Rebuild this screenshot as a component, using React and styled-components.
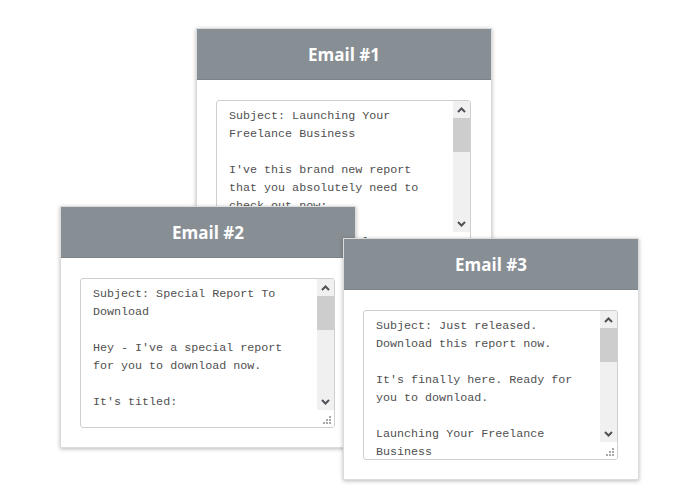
import styled, { createGlobalStyle } from 'styled-components';

const GlobalStyle = createGlobalStyle`
  html, body {
    margin: 0;
    padding: 0;
    background: #ffffff;
  }
`;

//Canvas the cards sit on
const Canvas = styled.div`
  position: relative;
  width: 700px;
  height: 500px;
  overflow: hidden;
  background: #ffffff;
`;

//Email card
const Card = styled.div`
  position: absolute;
  left: ${props => props.x}px;
  top: ${props => props.y}px;
  z-index: ${props => props.z};
  width: 296px;
  display: flex;
  flex-direction: column;
  background: #ffffff;
  border: 1px solid #dcdcdc;
  box-sizing: border-box;
  box-shadow: 0 1px 4px rgba(0, 0, 0, 0.28);
`;

const Header = styled.div`
  height: 51px;
  display: flex;
  align-items: center;
  justify-content: center;
  background: #878e94;
  border-bottom: 1px solid #7b8288;
  box-sizing: border-box;
`;

const Title = styled.h3`
  margin: 0;
  font-family: 'Open Sans', 'Liberation Sans', sans-serif;
  font-weight: 700;
  font-size: 17px;
  color: #ffffff;
`;

const Body = styled.div`
  padding: 20px 19px 19px 19px;
  display: flex;
`;

//Message box: text + scrollbar + resize grip
const MessageBox = styled.div`
  width: 255px;
  height: 150px;
  box-sizing: border-box;
  border: 1px solid #cfcfcf;
  border-radius: 3px;
  overflow: hidden;
  display: grid;
  grid-template-columns: 1fr 17px;
  grid-template-rows: 1fr 17px;
  background: #ffffff;
`;

const MessageText = styled.div`
  grid-column: 1;
  grid-row: 1 / span 2;
  padding: 6px 12px;
  overflow: hidden;
  white-space: pre-wrap;
  overflow-wrap: break-word;
  font-family: 'Liberation Mono', 'Courier New', monospace;
  font-size: 11.7px;
  line-height: 18px;
  color: #505050;
`;

const ScrollBar = styled.div`
  grid-column: 2;
  grid-row: 1;
  display: flex;
  flex-direction: column;
  background: #f0f0f0;
`;

const ScrollButton = styled.div`
  height: 17px;
  flex: none;
  display: flex;
  align-items: center;
  justify-content: center;
`;

const Track = styled.div`
  flex: 1;
  display: flex;
  flex-direction: column;
`;

const Thumb = styled.div`
  height: 34px;
  background: #cdcdcd;
`;

const Grip = styled.div`
  grid-column: 2;
  grid-row: 2;
  display: flex;
  align-items: flex-end;
  justify-content: flex-end;
  background: #ffffff;
`;

const Chevron = ({ up }) => (
  <svg width="9" height="6" viewBox="0 0 9 6">
    <path
      d={up ? 'M1 5 L4.5 1.5 L8 5' : 'M1 1 L4.5 4.5 L8 1'}
      fill="none"
      stroke="#505057"
      strokeWidth="2"
    />
  </svg>
);

const GripDots = () => (
  <svg width="17" height="17" viewBox="0 0 17 17">
    <g fill="#a8a8a8">
      <rect x="12" y="6" width="2" height="2" />
      <rect x="9" y="9" width="2" height="2" />
      <rect x="12" y="9" width="2" height="2" />
      <rect x="6" y="12" width="2" height="2" />
      <rect x="9" y="12" width="2" height="2" />
      <rect x="12" y="12" width="2" height="2" />
    </g>
  </svg>
);

const emails = [
  {
    id: 1,
    x: 196,
    y: 28,
    text:
      "Subject: Launching Your Freelance Business\n\n" +
      "I've this brand new report that you absolutely need to check out now:\n\n" +
      "Launching Your Freelance Business\n\n" +
      "It shows you step by step how to set up, find your first clients and grow a business you love.",
  },
  {
    id: 2,
    x: 60,
    y: 206,
    text:
      "Subject: Special Report To Download\n\n" +
      "Hey - I've a special report for you to download now.\n\n" +
      "It's titled:\n\n" +
      "Launching Your Freelance Business",
  },
  {
    id: 3,
    x: 343,
    y: 238,
    text:
      "Subject: Just released. Download this report now.\n\n" +
      "It's finally here. Ready for you to download.\n\n" +
      "Launching Your Freelance Business\n\n" +
      "Learn how to turn your skills into a freelance business.",
  },
];

function App() {
  return (
    <Canvas>
      <GlobalStyle />
      {emails.map(email => (
        <Card key={email.id} x={email.x} y={email.y} z={email.id}>
          <Header>
            <Title>Email #{email.id}</Title>
          </Header>
          <Body>
            <MessageBox>
              <MessageText>{email.text}</MessageText>
              <ScrollBar>
                <ScrollButton><Chevron up /></ScrollButton>
                <Track>
                  <Thumb />
                </Track>
                <ScrollButton><Chevron /></ScrollButton>
              </ScrollBar>
              <Grip><GripDots /></Grip>
            </MessageBox>
          </Body>
        </Card>
      ))}
    </Canvas>
  );
}

export default App;
